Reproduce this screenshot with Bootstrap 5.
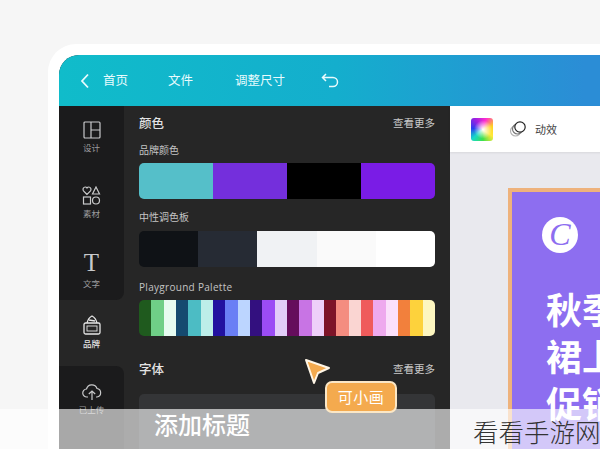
<!DOCTYPE html>
<html lang="zh">
<head>
  <meta charset="UTF-8" />
  <meta name="viewport" content="width=device-width, initial-scale=1.0">
  <title>可小画</title>
  <link href="https://cdn.jsdelivr.net/npm/bootstrap@5.3.3/dist/css/bootstrap.min.css" rel="stylesheet">
  <style>
    html, body { height: 449px; overflow: hidden; }
    body { background: #f6f6f6; font-family: "Noto Sans CJK SC", "Noto Sans", sans-serif; position: relative; }
    .frame-outer { position: absolute; left: 48px; top: 44px; width: 640px; height: 480px; padding: 11px; background: #fff; border-radius: 28px; }
    .app-window { height: 100%; border-radius: 20px 0 0 0; overflow: hidden; background: #262626; }
    .app-head { height: 51px; background: linear-gradient(90deg, #10bcca 0%, #14aecd 45%, #2b8dd6 85%); color: #e8fbfd; font-size: 12.5px; }
    .head-back { width: 44px; padding-left: 21px; }
    .head-home { width: 65px; }
    .head-file { width: 67px; }
    .head-size { width: 86px; }
    .app-side { width: 65px; font-size: 8.5px; color: #9b9c9e; }
    .side-label { margin-top: 2px; line-height: 12px; }
    .side-group { background: #1b1b1c; }
    .side-group-top { height: 194px; border-radius: 0 0 8px 0; padding-top: 15px; }
    .side-group-bot { flex: 1; border-radius: 0 8px 0 0; padding-top: 17px; }
    .side-active { height: 66px; color: #e6e6e6; padding-top: 15px; }
    .side-item { height: 65px; }
    .side-t { font-family: "Liberation Serif", serif; font-size: 25px; line-height: 24px; height: 24px; color: #c9cacb; }
    .app-panel { width: 326px; padding: 0 15px; color: #d9d9d9; }
    .panel-title { font-size: 12.5px; font-weight: 500; color: #e4e4e4; }
    .panel-more { font-size: 10.5px; color: #c9c9c9; }
    .panel-sub { font-size: 10px; color: #c4c4c4; line-height: 14px; }
    .title-row { height: 20px; }
    .strip { height: 36px; border-radius: 5px; overflow: hidden; }
    .strip > div { flex: 1; }
    .font-box { height: 80px; background: #343537; border-radius: 5px; }
    .app-canvas { flex: 1; background: #e9e9ee; }
    .tool-row { height: 46px; background: #fff; padding-left: 21px; font-size: 11px; color: #444; box-shadow: 0 1px 2px rgba(0,0,0,.08); }
    .swatch { width: 22px; height: 23px; border-radius: 3px; background:
      radial-gradient(circle at 55% 50%, #fff 0%, rgba(255,255,255,0) 55%),
      conic-gradient(from 20deg, #ff2bd0, #ffd21f, #ffe93a, #3fe04a, #18d8c8, #2a3cf0, #a020e0, #ff2bd0); }
    .poster { margin: 36px 0 0 58px; width: 200px; height: 300px; background: #8d6ef0; border: solid #eeb27c; border-width: 4px 0 0 4px; color: #fff; padding: 25px 0 0 34px; }
    .poster-logo { width: 36px; height: 36px; background: #fff; border-radius: 50%; color: #8d6ef0; font: italic 400 32px/35px "Liberation Serif", serif; text-align: center; margin-left: -4px; }
    .poster-text { font-size: 36px; font-weight: 700; line-height: 47px; margin-top: 32px; white-space: nowrap; }
    .fade-strip { position: absolute; left: 0; right: 0; top: 409px; bottom: 0; background: rgba(255,255,255,.62); z-index: 3; }
    .fade-title { position: absolute; left: 154px; top: 0; font-size: 24px; line-height: 30px; font-weight: 500; color: #fff; }
    .fade-mark { position: absolute; left: 473px; top: 7px; font-size: 25.5px; line-height: 30px; font-weight: 200; color: #333; white-space: nowrap; }
    .cursor-arrow { position: absolute; left: 303px; top: 358px; z-index: 4; }
    .cursor-tag { position: absolute; left: 325px; top: 381px; width: 72px; height: 32px; background: #f4aa4e; border: 2px solid #fbe7c6; border-radius: 7px; color: #fff; font-size: 15px; line-height: 27px; text-align: center; z-index: 4; letter-spacing: .5px; }
  </style>
</head>
<body>

<div class="frame-outer">
  <div class="app-window d-flex flex-column">
    <div class="app-head d-flex align-items-center flex-shrink-0">
      <div class="head-back d-flex">
        <svg width="10" height="16" viewBox="0 0 10 16" fill="none" stroke="#e8fbfd" stroke-width="1.8"><path d="M8 1.5 2 8l6 6.5"/></svg>
      </div>
      <div class="head-home">首页</div>
      <div class="head-file">文件</div>
      <div class="head-size">调整尺寸</div>
      <svg width="19" height="15" viewBox="0 0 19 15" fill="none" stroke="#e8fbfd" stroke-width="1.5"><path d="M5 1 1.5 4.5 5 8M2 4.5h10a4.5 4.5 0 0 1 0 9H8"/></svg>
    </div>
    <div class="d-flex flex-grow-1">
      <div class="app-side d-flex flex-column text-center flex-shrink-0">
        <div class="side-group side-group-top">
          <div class="side-item">
            <svg width="18" height="18" viewBox="0 0 18 18" fill="none" stroke="#c9cacb" stroke-width="1.2"><rect x="1" y="1" width="16" height="16" rx="1"/><path d="M8 1v16M8 9h9"/></svg>
            <div class="side-label">设计</div>
          </div>
          <div class="side-item">
            <svg width="19" height="19" viewBox="0 0 19 19" fill="none" stroke="#c9cacb" stroke-width="1.2"><path d="M5 8.5 1.5 4.8C.4 3.2 1.5 1 3.2 1 4 1 4.700 1.500 5 2c.3-.5 1-1 1.800-1C8.500 1 9.600 3.200 8.500 4.800z"/><path d="M14 1l3.500 7h-7z"/><rect x="1.500" y="11" width="7" height="7"/><circle cx="14" cy="14.500" r="3.500"/></svg>
            <div class="side-label">素材</div>
          </div>
          <div class="side-item">
            <div class="side-t">T</div>
            <div class="side-label">文字</div>
          </div>
        </div>
        <div class="side-active">
          <svg width="20" height="20" viewBox="0 0 20 20" fill="none" stroke="#e6e6e6" stroke-width="1.3"><rect x="2" y="8" width="16" height="11" rx="1.500"/><path d="M5 8c1-4 3-6 5-7 2 1 4 3 5 7M7 5l6 1"/><rect x="5" y="11" width="10" height="5" stroke-width=".9"/></svg>
          <div class="side-label fw-medium">品牌</div>
        </div>
        <div class="side-group side-group-bot">
          <svg width="20" height="18" viewBox="0 0 20 18" fill="none" stroke="#c9cacb" stroke-width="1.2"><path d="M6 14H5a4 4 0 0 1-.5-8A5.500 5.500 0 0 1 15 5.500 4.300 4.300 0 0 1 15 14h-1"/><path d="M10 17V8M6.800 11 10 8l3.200 3"/></svg>
          <div class="side-label">已上传</div>
        </div>
      </div>

      <div class="app-panel flex-shrink-0">
        <div class="title-row d-flex justify-content-between align-items-center" style="margin-top:7px">
          <span class="panel-title">颜色</span><span class="panel-more">查看更多</span>
        </div>
        <div class="panel-sub" style="margin-top:10px">品牌颜色</div>
        <div class="strip d-flex" style="margin-top:6px">
          <div style="background:#55bfc9"></div><div style="background:#742fdc"></div><div style="background:#000"></div><div style="background:#7a1ce6"></div>
        </div>
        <div class="panel-sub" style="margin-top:11px">中性调色板</div>
        <div class="strip d-flex" style="margin-top:7px">
          <div style="background:#0f1216"></div><div style="background:#262b34"></div><div style="background:#f0f2f4"></div><div style="background:#fafafa"></div><div style="background:#fff"></div>
        </div>
        <div class="panel-sub" style="margin-top:13px;font-family:'Open Sans',sans-serif;letter-spacing:.3px">Playground Palette</div>
        <div id="palette" class="strip d-flex" style="margin-top:6px"></div>
        <div class="title-row d-flex justify-content-between align-items-center" style="margin-top:23px">
          <span class="panel-title">字体</span><span class="panel-more">查看更多</span>
        </div>
        <div class="font-box" style="margin-top:15px"></div>
      </div>

      <div class="app-canvas">
        <div class="tool-row d-flex align-items-center">
          <div class="swatch"></div>
          <svg class="ms-3" width="18" height="18" viewBox="0 0 18 18" fill="#fff" stroke-width="1.2"><circle cx="6.500" cy="11" r="5" stroke="#b5b5b5"/><circle cx="8.500" cy="9" r="5" stroke="#777"/><circle cx="11" cy="7" r="5.200" stroke="#222"/></svg>
          <span class="ms-2">动效</span>
        </div>
        <div class="poster">
          <div class="poster-logo">C</div>
          <div class="poster-text">秋季<br>裙上<br>促销</div>
        </div>
      </div>
    </div>
  </div>
</div>

<svg class="cursor-arrow" width="30" height="28" viewBox="0 0 30 28"><path d="M3 2 26 10 15 15 11 25z" fill="#f4aa4e" stroke="#fff6e6" stroke-width="2" stroke-linejoin="round"/></svg>
<div class="cursor-tag">可小画</div>

<div class="fade-strip">
  <div class="fade-title">添加标题</div>
  <div class="fade-mark">看看手游网</div>
</div>

<script>
const colores = ['#1f5a1e','#6fcf87','#e6fbf0','#154a6f','#4cbcc4','#bdeee9','#2211a0','#6a7ff5','#bcd5ff','#33107f','#9b4cf5','#e2cdf9','#650d5c','#c874e4','#eed0f9','#7d1428','#f48d80','#fad5d2','#ef5b5b','#eeaaee','#fbe0fb','#f2803c','#fdd23c','#fdf6c0'];
const paleta = document.getElementById('palette');
colores.forEach(c => {
  const celda = document.createElement('div');
  celda.style.background = c;
  paleta.appendChild(celda);
});
</script>
<script src="https://cdn.jsdelivr.net/npm/bootstrap@5.3.3/dist/js/bootstrap.bundle.min.js"></script>
</body>
</html>
